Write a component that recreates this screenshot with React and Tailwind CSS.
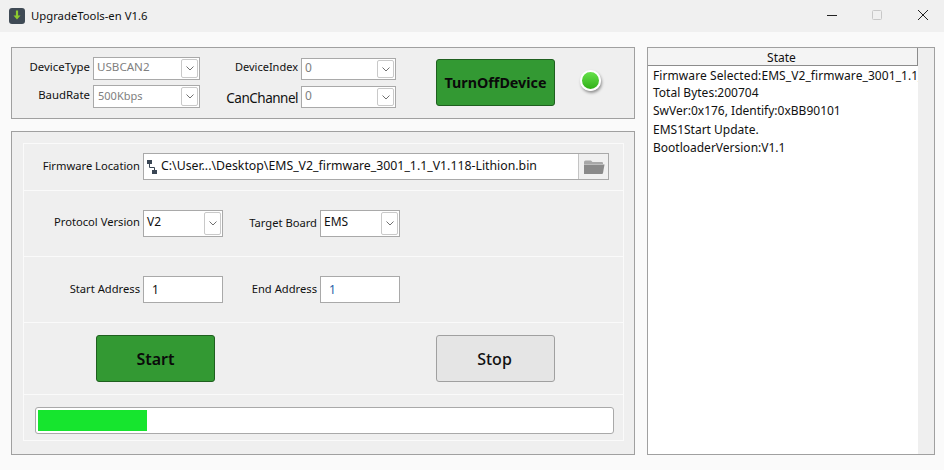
const F = "font-['Noto_Sans',sans-serif]";

function Chevron() {
  return (
    <svg width="8" height="5" viewBox="0 0 8 5" fill="none" stroke="#707070" strokeWidth="1">
      <path d="M0.5 0.5 L4 4 L7.5 0.5" />
    </svg>
  );
}

function Combo({ value, w, h = "h-[23px]", color = "text-[#808080]", text = "text-[12px]" }) {
  return (
    <div className={`${w} ${h} flex items-center justify-between bg-white border border-[#a9a9a9] pl-[3px] pr-[1px]`}>
      <span className={`${color} ${text}`}>{value}</span>
      <div className="w-[17px] h-[calc(100%-2px)] flex items-center justify-center bg-white border border-[#c9c9c9] rounded-[2px]">
        <Chevron />
      </div>
    </div>
  );
}

function GreenButton({ children, cls }) {
  return (
    <div className={`w-[119px] h-[47px] flex items-center justify-center bg-[#339933] border border-[#1f5f1f] rounded-[3px] text-[#0a0a0a] ${cls}`}>
      {children}
    </div>
  );
}

function Row({ h, last, children, cls = "" }) {
  return (
    <div className={`${h} flex items-center ${last ? "" : "border-b border-[#fafafa]"} ${cls}`}>{children}</div>
  );
}

function Address({ value, color }) {
  return (
    <div className={`w-[80px] h-[27px] flex items-center bg-white border border-[#a9a9a9] pl-[8px] text-[12px] ${color}`}>{value}</div>
  );
}

export default function App() {
  return (
    <div className={`w-[944px] h-[470px] flex flex-col bg-[#fafafa] text-[#111] overflow-hidden ${F}`}>
      <header className="h-[32px] shrink-0 flex items-center bg-[#f0f0f0] pl-[9px]">
        <svg width="16" height="16" viewBox="0 0 16 16">
          <rect x="0" y="0" width="16" height="16" rx="3" fill="#3f4a55" />
          <path d="M6.9 2.5 H9.1 V7.5 H11.5 L8 11.5 L4.5 7.5 H6.9 Z" fill="#8ecb2f" />
        </svg>
        <span className="ml-[6px] text-[11.3px] text-[#111]">UpgradeTools-en V1.6</span>
        <div className="ml-auto flex items-center pb-[2px]">
          <svg width="10" height="10" viewBox="0 0 10 10" className="mr-[35px]" stroke="#222" strokeWidth="1">
            <path d="M0 5.5 H10" />
          </svg>
          <svg width="10" height="10" viewBox="0 0 10 10" className="mr-[36px]" fill="none" stroke="#c8c8c8" strokeWidth="1">
            <rect x="0.5" y="0.5" width="9" height="9" rx="1" />
          </svg>
          <svg width="10" height="10" viewBox="0 0 10 10" className="mr-[16px]" stroke="#222" strokeWidth="1">
            <path d="M0 0 L10 10 M10 0 L0 10" />
          </svg>
        </div>
      </header>

      <main className="flex-1 flex gap-[12px] pl-[11px] pt-[15px] pb-[15px]">
        <div className="w-[624px] flex flex-col gap-[12px]">
          <section className="h-[72px] flex items-center bg-[#efefef] border border-[#a0a0a0] text-[11.4px]">
            <div className="grid grid-cols-[77px_107px] gap-x-[3px] gap-y-[5px] items-center ml-[1px] mb-[1px]">
              <span className="text-right pb-[4px]">DeviceType</span>
              <Combo value="USBCAN2" w="w-[107px]" text="text-[11.6px] pb-[4px]" />
              <span className="text-right pb-[4px]">BaudRate</span>
              <Combo value="500Kbps" w="w-[107px]" text="text-[11px] pl-[1px]" />
            </div>
            <div className="grid grid-cols-[98px_95px] gap-x-[3px] gap-y-[6px] items-center">
              <span className="text-right pb-[4px] text-[11px]">DeviceIndex</span>
              <Combo value="0" w="w-[95px]" h="h-[22px]" text="text-[12px] pb-[3px]" />
              <span className="text-right text-[13.5px] leading-[19px] tracking-[-0.5px] pt-[3px]">CanChannel</span>
              <Combo value="0" w="w-[95px]" h="h-[22px]" text="text-[12px] pb-[3px]" />
            </div>
            <GreenButton cls="ml-[40px] mb-[1px] text-[14.3px] font-bold">TurnOffDevice</GreenButton>
            <div className="ml-[25px] mb-[6px] w-[21px] h-[21px] rounded-full border-2 border-white bg-gradient-to-b from-[#66e24a] to-[#2fb015] shadow-[1px_2px_3px_rgba(0,0,0,0.4)]" />
          </section>

          <section className="flex-1 bg-[#efefef] border border-[#a0a0a0] pt-[11px] pl-[11px] pr-[10px] pb-[13px] text-[11.2px]">
            <div className="h-full flex flex-col border border-[#fafafa]">
              <Row h="h-[47px]">
                <span className="w-[116px] text-right pb-[2px]">Firmware Location</span>
                <div className="ml-[3px] mb-[1px] w-[466px] h-[27px] flex items-center bg-white border border-[#a9a9a9] pl-[2px]">
                  <svg width="12" height="16" viewBox="0 0 12 16" className="shrink-0">
                    <rect x="1" y="1" width="5" height="4" fill="#3a4654" />
                    <rect x="6" y="11" width="5" height="4" fill="#3a4654" />
                    <path d="M3.5 5 V8.5 H8.5 V11" fill="none" stroke="#3a4654" strokeWidth="1" />
                  </svg>
                  <span className="ml-[3px] text-[12.3px] whitespace-nowrap">C:\User...\Desktop\EMS_V2_firmware_3001_1.1_V1.118-Lithion.bin</span>
                  <div className="ml-auto w-[30px] h-full flex items-center justify-center bg-[#f0f0f0] border-l border-[#c4c4c4] shrink-0">
                    <svg width="22" height="16" viewBox="0 0 22 16">
                      <path d="M1 3 Q1 1.5 2.5 1.5 H8 L9.5 3 H19 Q20 3 20 4 V5 H1 Z" fill="#a8a8a8" />
                      <path d="M1 15 L1 5.5 H21.5 L20 14 Q19.8 15 19 15 Z" fill="#8a8a8a" />
                    </svg>
                  </div>
                </div>
              </Row>
              <Row h="h-[66px]">
                <span className="w-[116px] text-right pb-[3px]">Protocol Version</span>
                <Combo value="V2" w="ml-[3px] mb-[1px] w-[80px]" h="h-[27px]" color="text-[#111]" text="text-[12px] pb-[2px]" />
                <span className="w-[94px] text-right">Target Board</span>
                <Combo value="EMS" w="ml-[3px] mb-[1px] w-[80px]" h="h-[27px]" color="text-[#111]" text="text-[12px] pb-[2px]" />
              </Row>
              <Row h="h-[66px]">
                <span className="w-[116px] text-right pb-[1px]">Start Address</span>
                <div className="ml-[3px]"><Address value="1" color="text-[#111]" /></div>
                <span className="w-[94px] text-right pb-[1px]">End Address</span>
                <div className="ml-[3px]"><Address value="1" color="text-[#1f5fa8]" /></div>
              </Row>
              <Row h="h-[72px]">
                <div className="ml-[72px]">
                  <GreenButton cls="text-[16px] font-semibold">Start</GreenButton>
                </div>
                <div className="ml-[221px] w-[119px] h-[47px] flex items-center justify-center pr-[2px] bg-[#e5e5e5] border border-[#a0a0a0] rounded-[3px] text-[16px] font-medium">
                  Stop
                </div>
              </Row>
              <Row h="flex-1" last cls="pl-[11px] pt-[6px]">
                <div className="w-[579px] h-[27px] bg-white border border-[#a9a9a9] rounded-[3px] p-[2px]">
                  <div className="w-[109px] h-full bg-[#16e52e]" />
                </div>
              </Row>
            </div>
          </section>
        </div>

        <aside className="w-[288px] flex bg-[#efefef] border border-[#a0a0a0] text-[12px]">
          <div className="w-[270px] flex flex-col bg-white overflow-hidden">
            <div className="h-[18px] shrink-0 flex items-center justify-center pt-[2px] pr-[2px] bg-[#f4f4f4] border-b border-r border-[#8c8c8c]">State</div>
            <div className="pl-[5px] pt-[1px] whitespace-nowrap">
              <div className="h-[17px] leading-[17px] tracking-[0.08px]">Firmware Selected:EMS_V2_firmware_3001_1.1_V1.118-Lithion.bin</div>
              <div className="h-[18px] leading-[18px]">Total Bytes:200704</div>
              <div className="h-[19px] leading-[18px]">SwVer:0x176, Identify:0xBB90101</div>
              <div className="h-[18px] leading-[18px]">EMS1Start Update.</div>
              <div className="h-[18px] leading-[18px]">BootloaderVersion:V1.1</div>
            </div>
          </div>
        </aside>
      </main>
    </div>
  );
}
